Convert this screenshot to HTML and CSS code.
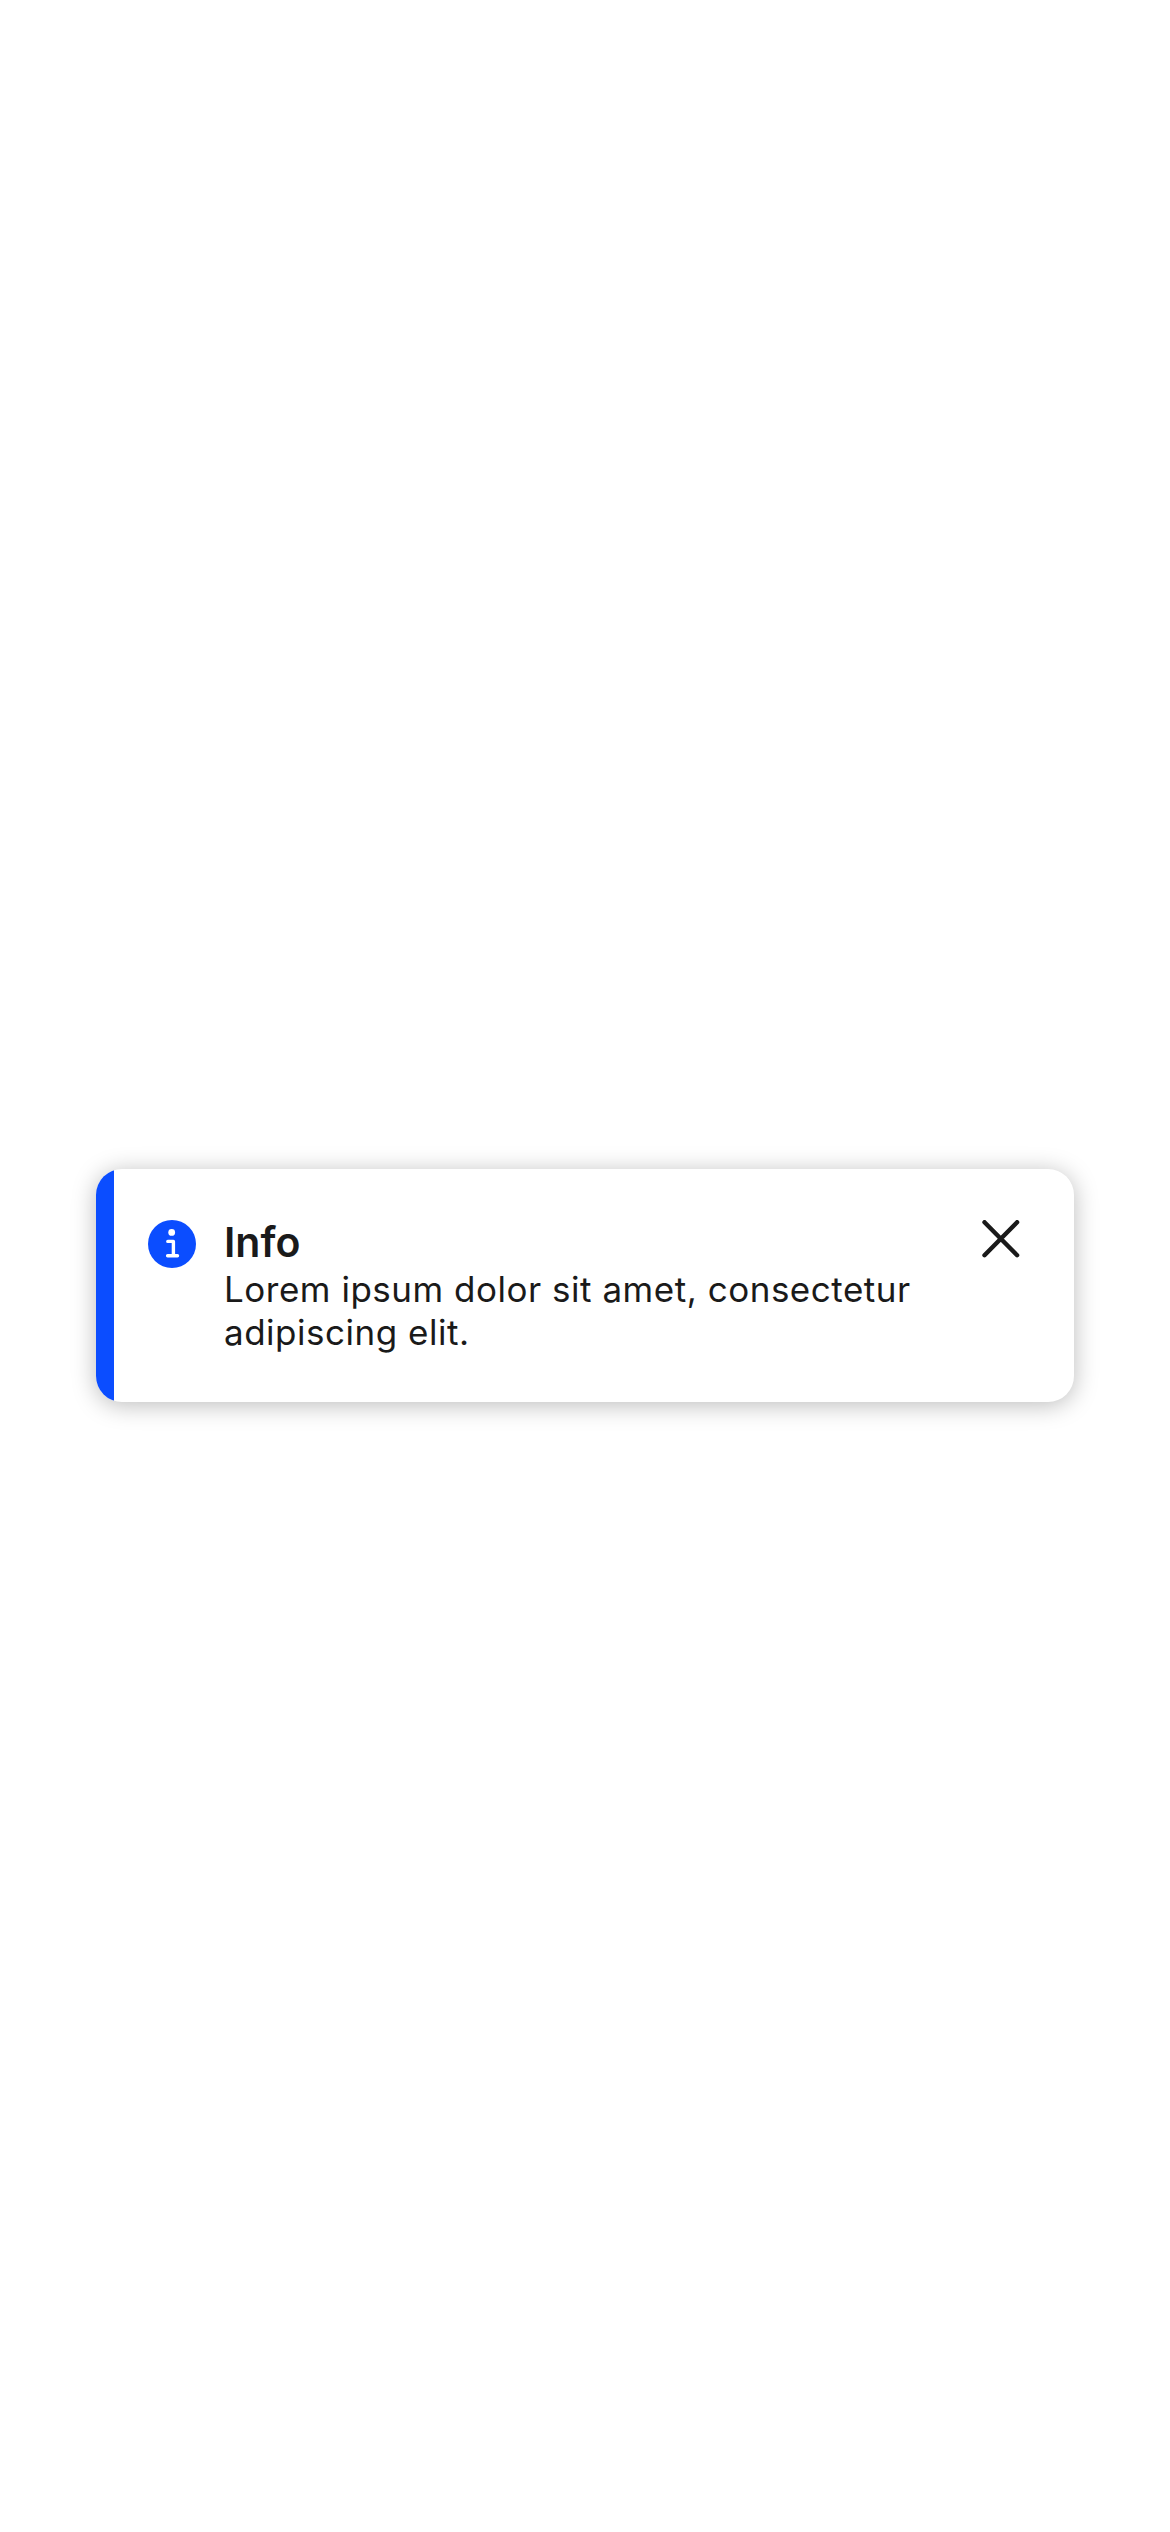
FILE: index.html
```html
<!DOCTYPE html>
<html lang="en">
<head>
<meta charset="utf-8">
<title>Info</title>
<link rel="stylesheet" href="styles.css">
</head>
<body>
<div class="toast" role="status">
  <span class="accent"></span>
  <svg class="icon" viewBox="0 0 48 48" aria-hidden="true">
    <circle cx="24" cy="24" r="24" fill="#0b4dff"/>
    <circle cx="23.7" cy="12.4" r="3.4" fill="#fff"/>
    <path d="M19.8 21.4H25.4V35.8M19.6 35.8H29.5" fill="none" stroke="#fff" stroke-width="3.4" stroke-linecap="round" stroke-linejoin="round"/>
  </svg>
  <div class="content">
    <h1 class="title">Info</h1>
    <p class="message">Lorem ipsum dolor sit amet, consectetur adipiscing elit.</p>
  </div>
  <button class="close" aria-label="Close">
    <svg class="cross" viewBox="0 0 38 38"><path d="M2.5 2.2L35.1 35.2M35.1 2.2L2.5 35.2" fill="none" stroke="#1a1a1a" stroke-width="4.4" stroke-linecap="round"/></svg>
  </button>
</div>
</body>
</html>
```
FILE: styles.css
```css
body {
  display: flex;
  flex-direction: column;
  align-items: center;
  box-sizing: border-box;
  min-height: 2532px;
  margin: 0;
  padding-top: 1169px;
  background: #fff;
  font-family: Inter, "Liberation Sans", sans-serif;
  color: #1a1a1a;
}

.toast {
  display: flex;
  align-items: flex-start;
  width: 978px;
  height: 233px;
  border-radius: 26px;
  overflow: hidden;
  background: #fff;
  box-shadow: 0 3px 24px rgba(0, 0, 0, 0.27);
}

.accent {
  width: 18px;
  align-self: stretch;
  background: #0b4dff;
}

.icon {
  width: 48px;
  height: 48px;
  margin: 51px 28px 0 34px;
}

.content {
  width: 700px;
  padding-top: 48px;
}

.title {
  margin: 0;
  font-size: 41px;
  line-height: 50px;
  font-weight: 600;
}

.message {
  margin: 1px 0 0;
  font-size: 35px;
  line-height: 43px;
  letter-spacing: 0.52px;
}

.close {
  margin: 51px 0 0 58px;
  padding: 0;
  border: 0;
  background: none;
  line-height: 0;
}

.cross {
  width: 38px;
  height: 38px;
}
```
